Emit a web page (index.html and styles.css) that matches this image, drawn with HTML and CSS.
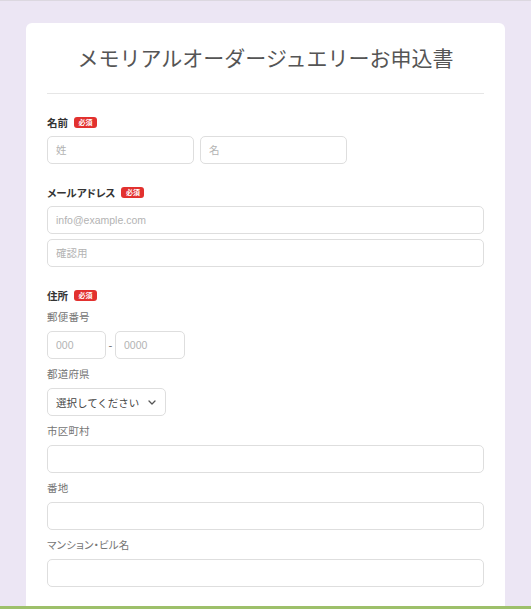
FILE: index.html
```html
<!DOCTYPE html>
<html lang="ja">
<head>
<meta charset="utf-8">
<title>メモリアルオーダージュエリーお申込書</title>
<link rel="stylesheet" href="styles.css">
</head>
<body>
<main class="card">
  <header class="card-head">
    <h1 class="title">メモリアルオーダージュエリーお申込書</h1>
  </header>

  <section class="group">
    <div class="label-row"><span class="label">名前</span><span class="badge">必須</span></div>
    <div class="name-row">
      <input class="field field-half" type="text" placeholder="姓">
      <input class="field field-half" type="text" placeholder="名">
    </div>
  </section>

  <section class="group">
    <div class="label-row"><span class="label">メールアドレス</span><span class="badge">必須</span></div>
    <input class="field field-full" type="email" placeholder="info@example.com">
    <input class="field field-full field-next" type="email" placeholder="確認用">
  </section>

  <section class="group">
    <div class="label-row"><span class="label">住所</span><span class="badge">必須</span></div>
    <div class="sub sub-first">郵便番号</div>
    <div class="zip-row">
      <input class="field zip1" type="text" placeholder="000">
      <span class="dash">-</span>
      <input class="field zip2" type="text" placeholder="0000">
    </div>
    <div class="sub">都道府県</div>
    <div class="select-wrap">
      <select class="field select">
        <option>選択してください</option>
      </select>
      <svg class="chev" width="8" height="5" viewBox="0 0 8 5"><path d="M1 1 L4 4 L7 1" fill="none" stroke="#555" stroke-width="1.3" stroke-linecap="round" stroke-linejoin="round"/></svg>
    </div>
    <div class="sub">市区町村</div>
    <input class="field field-full" type="text">
    <div class="sub">番地</div>
    <input class="field field-full" type="text">
    <div class="sub">マンション・ビル名</div>
    <input class="field field-full" type="text">
  </section>
</main>
<footer class="footer-bar"></footer>
</body>
</html>
```
FILE: styles.css
```css
* { box-sizing: border-box; }
html, body { margin: 0; padding: 0; }
body {
  background: #ece6f4;
  border-top: 1px solid #dcd8e0;
  font-family: "Noto Sans CJK JP", "Noto Sans", sans-serif;
  color: #333;
}
.card {
  margin: 22px 0 0 26px;
  width: 479px;
  background: #fff;
  border-radius: 6px 6px 0 0;
  padding: 0 21px 19px;
}
.card-head {
  padding: 20px 0 22px;
  border-bottom: 1px solid #e6e6e6;
}
.title {
  margin: 0;
  font-size: 21px;
  line-height: 28px;
  font-weight: 400;
  color: #555;
  text-align: center;
}
.group { margin-top: 20px; }
.label-row {
  display: flex;
  align-items: center;
  gap: 6px;
  height: 16px;
  margin-bottom: 6px;
}
.label {
  font-size: 10.5px;
  font-weight: 700;
  color: #333;
  font-feature-settings: "palt";
}
.badge {
  display: inline-block;
  background: #e2312f;
  color: #fff;
  font-size: 7px;
  font-weight: 700;
  line-height: 11px;
  height: 11px;
  padding: 0 4.5px;
  border-radius: 3px;
}
.field {
  display: block;
  height: 28px;
  border: 1px solid #dedede;
  border-radius: 5px;
  background: #fff;
  padding: 0 8px;
  font-family: "Liberation Sans", "Noto Sans CJK JP", sans-serif;
  font-size: 10.5px;
  color: #333;
  outline: none;
}
.field::placeholder { color: #b3b3b3; }
.field-full { width: 100%; }
.field-next { margin-top: 5px; }
.name-row { display: flex; gap: 6px; }
.field-half { width: 147px; }
.sub {
  font-size: 10.5px;
  line-height: 16px;
  color: #747474;
  margin-top: 7px;
  margin-bottom: 6px;
  font-feature-settings: "palt";
  letter-spacing: 0.2px;
}
.sub-first { margin-top: 6px; }
.zip-row { display: flex; align-items: center; }
.zip1 { width: 59px; }
.zip2 { width: 70px; }
.dash {
  width: 9px;
  text-align: center;
  font-size: 11px;
  color: #666;
}
.select-wrap { position: relative; width: 119px; }
.select {
  width: 119px;
  appearance: none;
  -webkit-appearance: none;
  font-family: "Noto Sans CJK JP", sans-serif;
  font-size: 10.5px;
  color: #444;
}
.chev {
  position: absolute;
  right: 10px;
  top: 12px;
  pointer-events: none;
}
.footer-bar {
  height: 40px;
  background: #9dc06a;
}
```
